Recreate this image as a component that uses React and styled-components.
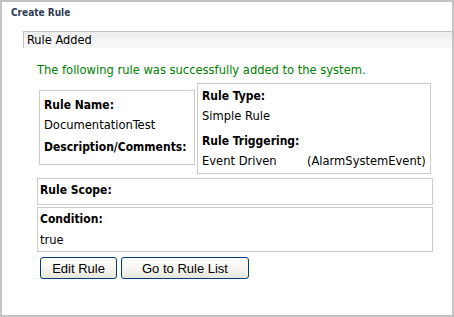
import React from 'react';
import styled, { createGlobalStyle } from 'styled-components';

const GlobalStyle = createGlobalStyle`
  html, body {
    margin: 0;
    padding: 0;
    background: #ffffff;
  }
  body {
    font-family: "DejaVu Sans Condensed", "DejaVu Sans", sans-serif;
  }
`;

const Frame = styled.div`
  width: 454px;
  height: 317px;
  box-sizing: border-box;
  border: 2px solid #c3c3c3;
  background: #ffffff;
`;

const TitleBar = styled.div`
  height: 29px;
  box-sizing: border-box;
  padding: 5px 0 0 9px;
  font-size: 10px;
  line-height: 12px;
  font-weight: bold;
  color: #2e3a55;
`;

const PanelHeader = styled.div`
  margin-left: 21px;
  height: 17px;
  box-sizing: border-box;
  padding-left: 3px;
  border-top: 1px solid #c0c0c0;
  border-left: 1px solid #c0c0c0;
  background: linear-gradient(#eeeeee 0, #eeeeee 40%, #f6f6f6 40%, #f6f6f6 100%);
  font-size: 12.7px;
  line-height: 16px;
  color: #000000;
`;

const PanelBody = styled.div`
  margin-left: 35px;
  width: 396px;
`;

const Message = styled.div`
  margin-top: 14px;
  font-size: 12.8px;
  line-height: 16px;
  color: #008000;
`;

const InfoRow = styled.div`
  display: flex;
  align-items: flex-start;
  gap: 2px;
  margin: 5px 0 0 2px;
`;

const Box = styled.div`
  box-sizing: border-box;
  border: 1px solid #cbcbcb;
  width: ${(p) => p.$width || '396px'};
  padding: ${(p) => p.$pad || '1px 2px'};
  margin-top: ${(p) => p.$top || '0'};
`;

const Label = styled.div`
  font-size: 12px;
  font-weight: bold;
  line-height: 20px;
  color: #000000;
  margin-top: ${(p) => p.$gap || '0'};
`;

const Value = styled.div`
  display: flex;
  font-size: 12.8px;
  line-height: 20px;
  color: #000000;
  margin-top: ${(p) => p.$gap || '0'};
`;

const Trigger = styled.span`
  width: 105px;
  flex: none;
`;

const ButtonRow = styled.div`
  display: flex;
  gap: 4px;
  margin: 5px 0 0 3px;
`;

const XpButton = styled.button`
  width: ${(p) => p.$width};
  height: 22px;
  padding: 0;
  box-sizing: border-box;
  border: 1px solid #003c74;
  border-radius: 3px;
  background: linear-gradient(#ffffff 0%, #f5f4ef 55%, #e6e5dc 100%);
  font-family: "Liberation Sans", Arial, sans-serif;
  font-size: 13px;
  color: #000000;
  cursor: pointer;
`;

export default function App() {
  return (
    <>
      <GlobalStyle />
      <Frame>
        <TitleBar>Create Rule</TitleBar>
        <PanelHeader>Rule Added</PanelHeader>
        <PanelBody>
          <Message>The following rule was successfully added to the system.</Message>
          <InfoRow>
            <Box $width="156px" $pad="4px 4px 7px" $top="7px">
              <Label>Rule Name:</Label>
              <Value>DocumentationTest</Value>
              <Label $gap="2px">Description/Comments:</Label>
            </Box>
            <Box $width="234px" $pad="2px 4px">
              <Label>Rule Type:</Label>
              <Value>Simple Rule</Value>
              <Label $gap="5px">Rule Triggering:</Label>
              <Value>
                <Trigger>Event Driven</Trigger>
                <span>(AlarmSystemEvent)</span>
              </Value>
            </Box>
          </InfoRow>
          <Box $top="4px" $pad="1px 2px 4px">
            <Label>Rule Scope:</Label>
          </Box>
          <Box $top="2px" $pad="1px 2px 1px">
            <Label>Condition:</Label>
            <Value $gap="1px">true</Value>
          </Box>
          <ButtonRow>
            <XpButton $width="77px">Edit Rule</XpButton>
            <XpButton $width="128px">Go to Rule List</XpButton>
          </ButtonRow>
        </PanelBody>
      </Frame>
    </>
  );
}
